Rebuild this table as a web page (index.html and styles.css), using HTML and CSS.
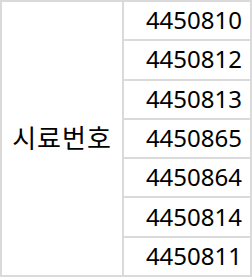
FILE: index.html
```html
<!DOCTYPE html>
<html lang="ko">
<head>
<meta charset="utf-8">
<link rel="stylesheet" href="styles.css">
</head>
<body>
<div class="sheet">
  <div class="label">시료번호</div>
  <div class="num">4450810</div>
  <div class="num">4450812</div>
  <div class="num">4450813</div>
  <div class="num">4450865</div>
  <div class="num">4450864</div>
  <div class="num">4450814</div>
  <div class="num">4450811</div>
</div>
</body>
</html>
```
FILE: styles.css
```css
html, body {
  margin: 0;
  padding: 0;
  background: #ffffff;
}
.sheet {
  box-sizing: border-box;
  width: 252px;
  height: 277px;
  display: grid;
  grid-template-columns: 120px 1fr;
  grid-template-rows: repeat(7, 1fr);
  gap: 2px;
  padding: 2px;
  background: #dadada;
  font-family: "Noto Sans", "Noto Sans CJK KR", sans-serif;
  color: #000;
}
.label {
  grid-row: 1 / span 7;
  background: #fff;
  display: flex;
  align-items: center;
  justify-content: center;
  padding-bottom: 4px;
  font-family: "Noto Sans CJK KR", sans-serif;
  font-size: 26px;
  letter-spacing: 1px;
}
.num {
  background: #fff;
  display: flex;
  align-items: center;
  justify-content: flex-end;
  padding-right: 8px;
  padding-bottom: 2px;
  font-size: 24px;
}
```
